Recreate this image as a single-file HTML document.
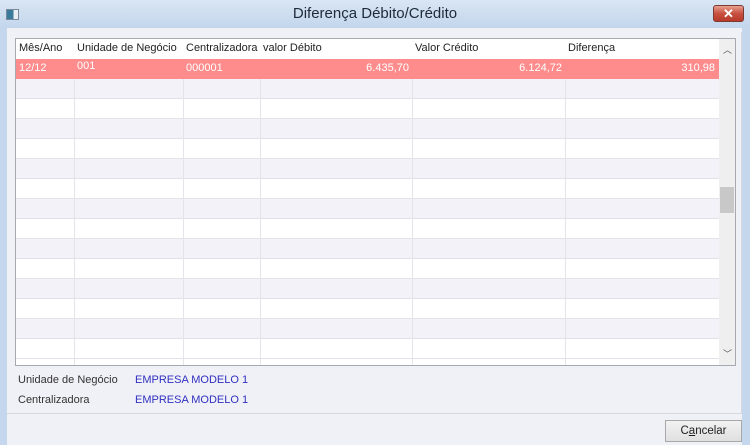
<!DOCTYPE html>
<html><head><meta charset="utf-8"><style>
*{margin:0;padding:0;box-sizing:border-box}
body{width:750px;height:445px;overflow:hidden;font-family:"Liberation Sans",sans-serif;font-size:11px;background:#c4d7ec;position:relative}
.title{position:absolute;left:0;top:0;width:750px;height:28px;background:linear-gradient(#d9e6f4,#c3d6ec);text-align:center;font-size:15px;line-height:28px;color:#1e2a3a}
.ico{position:absolute;left:6px;top:9px;width:13px;height:11px;border:1px solid #7a8a9a;background:linear-gradient(90deg,#3a7a9a 60%,#e8eef4 60%)}
.close{position:absolute;left:713px;top:5px;width:31px;height:17px;border:1px solid #7a3a30;border-radius:3px;background:linear-gradient(#e8a090,#c85040 50%,#b83a2a);color:#fff;font-size:13px;font-weight:bold;line-height:15px;text-align:center}
.client{position:absolute;left:7px;top:28px;width:735px;height:417px;background:#f0f0f7}
.panel{position:absolute;left:7px;top:32px;width:735px;height:382px;border-bottom:1px solid #d8d8e0;border-right:1px solid #d8d8e0}
.grid{position:absolute;left:15px;top:38px;width:721px;height:328px;border:1px solid #a8a8b0;background:#fff;overflow:hidden}
.hdr{position:absolute;left:0;top:0;height:20px;width:703px;background:#fff;color:#222}
.row{position:absolute;left:0;width:703px;height:20px;border-bottom:1px solid #e2e2e8}
.c{position:absolute;top:0;height:100%;line-height:19px;padding:0 3px;white-space:nowrap}
.vl{position:absolute;top:40px;bottom:0;width:1px;background:#e4e4ea}
.sb{position:absolute;left:703px;top:0;width:16px;height:326px;background:#efefef}
.thumb{position:absolute;left:1px;top:148px;width:14px;height:26px;background:#c8c8c8}
.lbl{position:absolute;left:18px;color:#333;font-size:11px}
.val{position:absolute;left:135px;color:#3030c0;font-size:11px}
.btn{position:absolute;left:665px;top:420px;width:77px;height:22px;border:1px solid #a8a8a8;background:linear-gradient(#f2f2f2,#e0e0e0);text-align:center;line-height:20px;font-size:11.5px;color:#222}
</style></head><body>
<div class="title"><div class="ico"></div>Diferença Débito/Crédito<div class="close">✕</div></div>
<div class="client"></div>
<div class="panel"></div>
<div class="grid">
<div class="hdr">
<div class="c" style="left:0">Mês/Ano</div>
<div class="c" style="left:58px">Unidade de Negócio</div>
<div class="c" style="left:167px">Centralizadora</div>
<div class="c" style="left:244px">valor Débito</div>
<div class="c" style="left:396px">Valor Crédito</div>
<div class="c" style="left:549px">Diferença</div>
</div>
<div class="row" style="top:20px;background:#ff8c8c;color:#fff;border:none">
<div class="c" style="left:0">12/12</div>
<div class="c" style="left:58px;line-height:14px">001</div>
<div class="c" style="left:167px">000001</div>
<div class="c" style="left:244px;width:152px;text-align:right">6.435,70</div>
<div class="c" style="left:396px;width:153px;text-align:right">6.124,72</div>
<div class="c" style="left:549px;width:153px;text-align:right">310,98</div>
</div>
<div class="row" style="top:40px;background:#f2f2f8"></div>
<div class="row" style="top:60px"></div>
<div class="row" style="top:80px;background:#f2f2f8"></div>
<div class="row" style="top:100px"></div>
<div class="row" style="top:120px;background:#f2f2f8"></div>
<div class="row" style="top:140px"></div>
<div class="row" style="top:160px;background:#f2f2f8"></div>
<div class="row" style="top:180px"></div>
<div class="row" style="top:200px;background:#f2f2f8"></div>
<div class="row" style="top:220px"></div>
<div class="row" style="top:240px;background:#f2f2f8"></div>
<div class="row" style="top:260px"></div>
<div class="row" style="top:280px;background:#f2f2f8"></div>
<div class="row" style="top:300px"></div>
<div class="vl" style="left:58px"></div>
<div class="vl" style="left:167px"></div>
<div class="vl" style="left:244px"></div>
<div class="vl" style="left:396px"></div>
<div class="vl" style="left:549px"></div>
<div class="sb"><div style="position:absolute;left:4px;top:4px;font-size:9px;color:#555">︿</div><div class="thumb"></div><div style="position:absolute;left:4px;top:308px;font-size:9px;color:#555">﹀</div></div>
</div>
<div class="lbl" style="top:374px">Unidade de Negócio</div><div class="val" style="top:374px">EMPRESA MODELO 1</div>
<div class="lbl" style="top:394px">Centralizadora</div><div class="val" style="top:394px">EMPRESA MODELO 1</div>
<div class="btn">C<u>a</u>ncelar</div>
</body></html>
